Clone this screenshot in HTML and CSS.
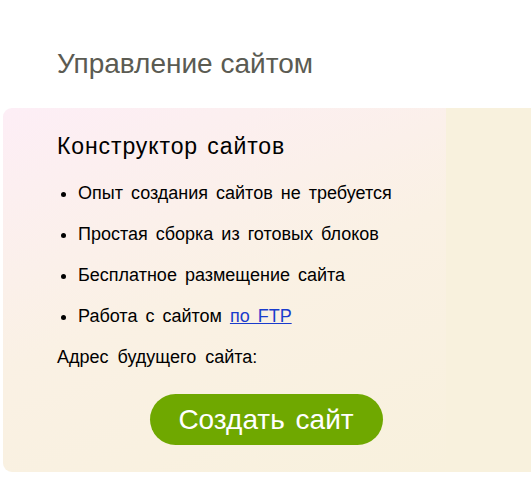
FILE: index.html
```html
<!DOCTYPE html>
<html lang="ru">
<head>
    <meta charset="UTF-8">
    <title>Управление сайтом</title>
    <link rel="stylesheet" href="styles.css">
</head>
<body>
    <h1 class="page-title">Управление сайтом</h1>

    <div class="promo">
        <h2 class="promo-title">Конструктор сайтов</h2>
        <ul class="promo-list">
            <li>Опыт создания сайтов не требуется</li>
            <li>Простая сборка из готовых блоков</li>
            <li>Бесплатное размещение сайта</li>
            <li>Работа с сайтом <a href="#">по FTP</a></li>
        </ul>
        <p class="promo-address">Адрес будущего сайта:</p>
        <div class="promo-action">
            <a class="btn-create" href="#">Создать сайт</a>
        </div>
    </div>
</body>
</html>
```

FILE: styles.css
```css
body {
    margin: 0;
    font-family: "Liberation Sans", Arial, sans-serif;
    background-color: #fff;
    color: #000;
    overflow: hidden;
}
.page-title {
    margin: 0;
    padding: 47px 0 27px 57px;
    font-size: 28px;
    font-weight: normal;
    color: #5b5b52;
    line-height: 34px;
}
.promo {
    margin-left: 3px;
    width: 560px;
    height: 364px;
    border-radius: 9px;
    background-color: #f8f1dd;
    background-image: linear-gradient(160deg, #fdeef6 0%, #faf1e4 50%, #f8f1dd 100%);
    background-size: 443px 100%;
    background-repeat: no-repeat;
    padding: 23px 0 0 54px;
    box-sizing: border-box;
}
.promo-title {
    margin: 0;
    font-size: 23px;
    font-weight: normal;
    line-height: 30px;
    letter-spacing: 0.9px;
    word-spacing: 2px;
}
.promo-list {
    margin: 22px 0 0;
    padding: 0 0 0 21px;
    font-size: 18px;
    line-height: 20px;
    word-spacing: 3px;
}
.promo-list li {
    margin-bottom: 21px;
}
.promo-list a {
    color: #1a3ccc;
}
.promo-address {
    margin: 2px 0 0;
    font-size: 18px;
    line-height: 20px;
    word-spacing: 4px;
}
.promo-action {
    display: flex;
    justify-content: center;
    margin-top: 27px;
    padding-right: 88px;
}
.btn-create {
    display: block;
    width: 233px;
    height: 51px;
    line-height: 51px;
    border-radius: 26px;
    background-color: #6fa800;
    color: #fff;
    text-decoration: none;
    text-align: center;
    font-size: 28px;
    word-spacing: 3px;
}
```
